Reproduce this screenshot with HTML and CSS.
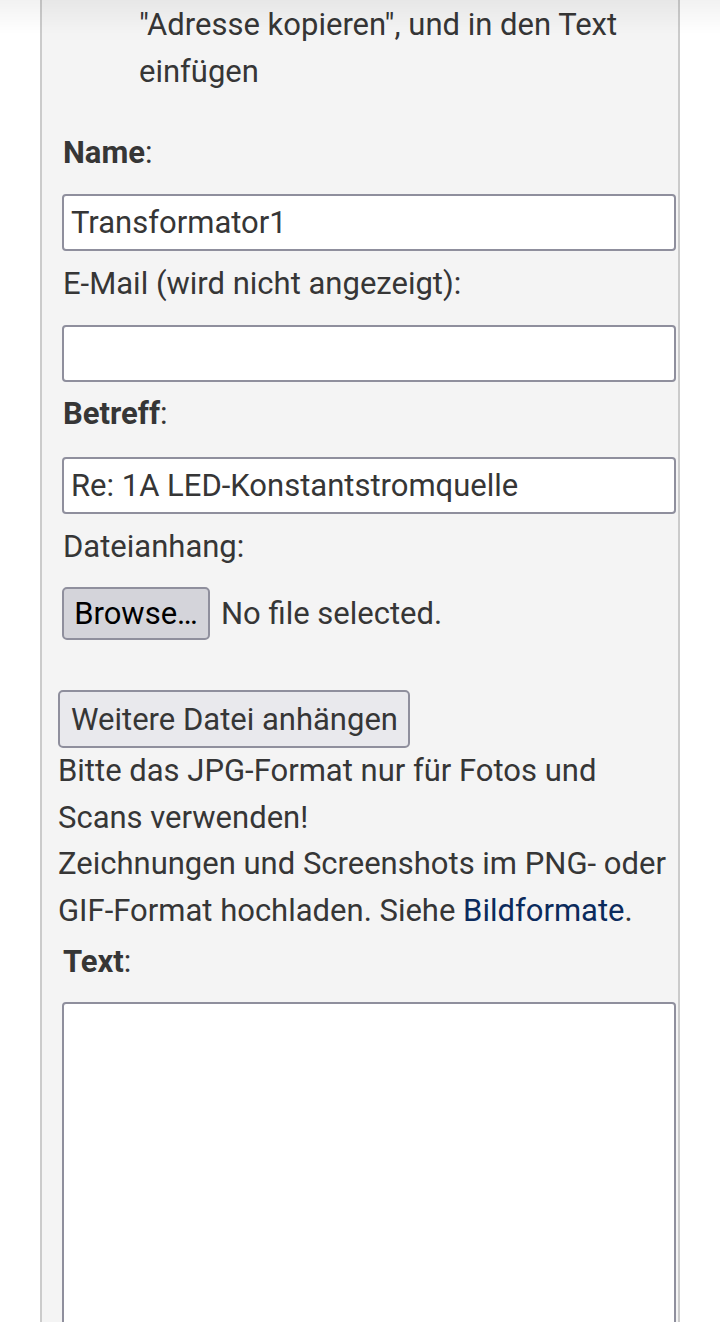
FILE: index.html
```html
<!DOCTYPE html>
<html lang="de">
<head>
    <meta charset="UTF-8">
    <meta name="viewport" content="width=device-width, initial-scale=1.0">
    <title>Beitrag schreiben</title>
    <link rel="stylesheet" href="styles.css">
</head>
<body>
    <div class="top-shadow"></div>

    <div class="panel">
        <ul class="hints">
            <li>"Adresse kopieren", und in den Text einfügen</li>
        </ul>

        <form class="post-form">
            <label class="field-label label-name" for="name"><b>Name</b>:</label>
            <input type="text" id="name" class="field-input input-name" value="Transformator1">

            <label class="field-label label-mail" for="email">E-Mail (wird nicht angezeigt):</label>
            <input type="text" id="email" class="field-input input-mail" value="">

            <label class="field-label label-subject" for="subject"><b>Betreff</b>:</label>
            <input type="text" id="subject" class="field-input input-subject" value="Re: 1A LED-Konstantstromquelle">

            <label class="field-label label-file">Dateianhang:</label>
            <div class="file-row">
                <button type="button" class="browse-button">Browse…</button>
                <span class="file-status">No file selected.</span>
            </div>

            <button type="button" class="more-button">Weitere Datei anhängen</button>
            <p class="format-note">
                Bitte das JPG-Format nur für Fotos und Scans verwenden!<br>
                Zeichnungen und Screenshots im PNG- oder GIF-Format hochladen. Siehe <a href="#">Bildformate</a>.
            </p>

            <label class="field-label label-text" for="text"><b>Text</b>:</label>
            <textarea id="text" class="field-text"></textarea>
        </form>
    </div>
</body>
</html>
```

FILE: styles.css
```css
body {
    font-family: 'Roboto', 'Noto Sans', sans-serif;
    font-size: 31px;
    line-height: 46.67px;
    color: #363636;
    background-color: white;
    margin: 0;
    padding: 0;
}
.top-shadow {
    position: fixed;
    top: 0;
    left: 0;
    right: 0;
    height: 34px;
    background: linear-gradient(rgba(0, 0, 0, 0.05), rgba(0, 0, 0, 0));
    pointer-events: none;
}
.panel {
    margin-left: 40px;
    width: 636px;
    min-height: 1400px;
    background-color: #f4f4f4;
    border-left: 2px solid #cbcbcb;
    border-right: 2px solid #cbcbcb;
    padding: 2px 0 0 0;
}
.hints {
    list-style: none;
    margin: 0;
    padding: 0 40px 0 97px;
}
.post-form {
    padding: 0 0 0 20px;
}
.field-label {
    display: block;
    padding-left: 1px;
}
.field-label b {
    font-weight: bold;
}
.field-input {
    display: block;
    box-sizing: border-box;
    width: 614px;
    height: 57px;
    margin: 0;
    padding: 0 7px;
    font-family: inherit;
    font-size: 31px;
    color: #363636;
    background-color: white;
    border: 2px solid #8f8f9d;
    border-radius: 4px;
}
.label-name { margin-top: 35px; }
.input-name { margin-top: 17px; }
.label-mail { margin-top: 10px; }
.input-mail { margin-top: 17px; }
.label-subject { margin-top: 9px; }
.input-subject { margin-top: 20px; }
.label-file { margin-top: 10px; }

.file-row {
    display: flex;
    align-items: center;
    gap: 11px;
    margin-top: 16px;
}
.browse-button {
    box-sizing: border-box;
    height: 53px;
    width: 148px;
    padding: 0;
    font-family: inherit;
    font-size: 31px;
    color: black;
    background-color: #d4d4da;
    border: 2px solid #8f8f9d;
    border-radius: 5px;
}
.file-status {
    line-height: 53px;
}
.more-button {
    display: block;
    box-sizing: border-box;
    height: 58px;
    margin: 50px 0 0 -4px;
    padding: 0 10px 0 11px;
    font-family: inherit;
    font-size: 31px;
    color: #363636;
    background-color: #e9e9ed;
    border: 2px solid #8f8f9d;
    border-radius: 5px;
}
.format-note {
    margin: 0 0 0 -4px;
    padding-right: 10px;
}
.format-note a {
    color: #0b2a5c;
    text-decoration: none;
}
.label-text { margin-top: 4px; }
.field-text {
    display: block;
    box-sizing: border-box;
    width: 614px;
    height: 400px;
    margin-top: 17px;
    background-color: white;
    border: 2px solid #8f8f9d;
    border-radius: 4px;
    resize: none;
}
```
